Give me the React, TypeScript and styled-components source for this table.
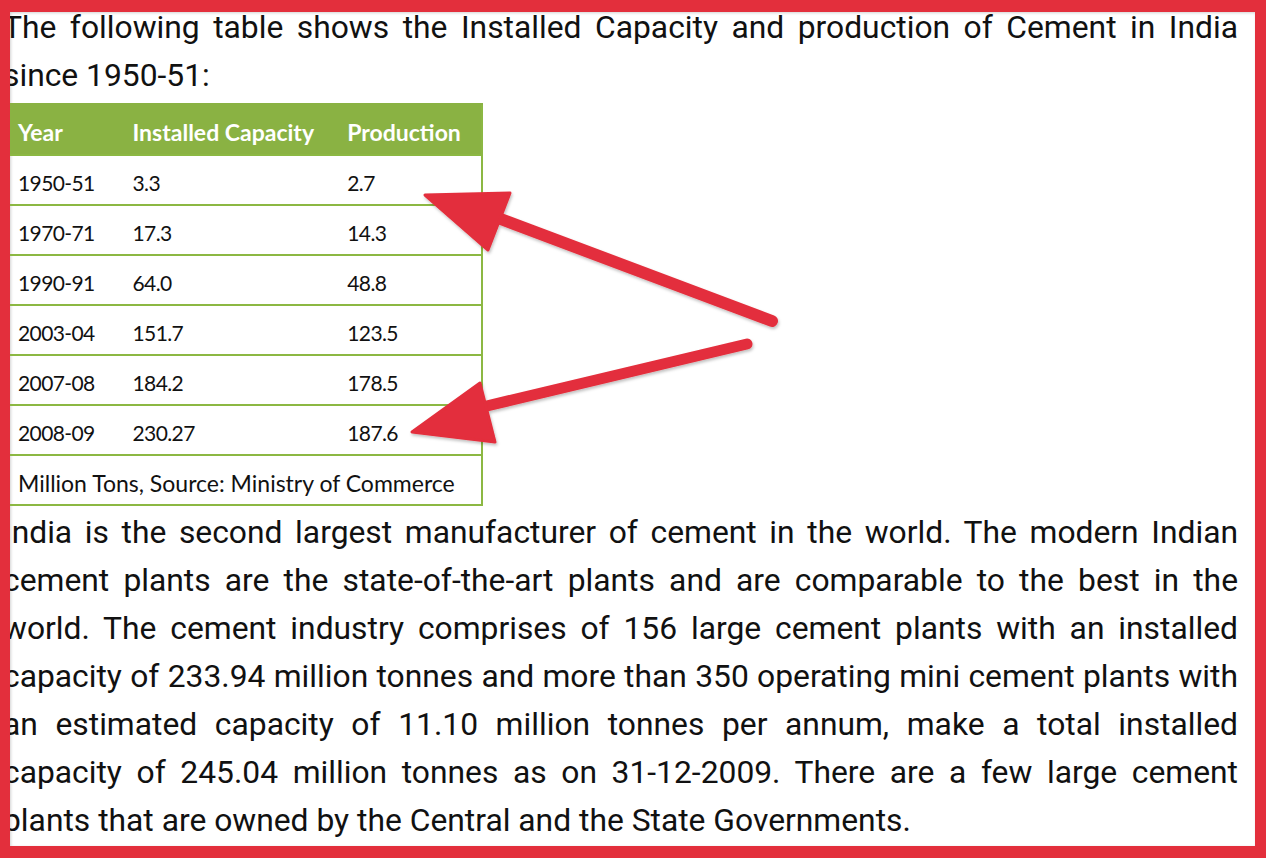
import React from "react";
import styled, { createGlobalStyle } from "styled-components";

const Global = createGlobalStyle`
  html, body { margin: 0; padding: 0; background: #ffffff; }
  * { box-sizing: border-box; }
`;

const Frame = styled.div`
  position: relative;
  width: 1266px;
  height: 858px;
  border-style: solid;
  border-color: #e32f3c;
  border-width: 12px 11px 12px 10px;
  background: #ffffff;
  overflow: hidden;
  box-shadow: inset 1px 1px 3px rgba(0, 0, 0, 0.18);
`;

const Content = styled.div`
  margin: -9px 0 0 -7px;
  width: 1235px;
  font-family: Roboto, "Liberation Sans", sans-serif;
  font-size: 31.8px;
  line-height: 48px;
  color: #111111;
`;

const Para = styled.p`
  margin: 0;
  text-align: justify;
`;

const Table = styled.table`
  margin: 4px 0 2px 0;
  border-collapse: collapse;
  width: 480px;
  font-family: Lato, "Open Sans", sans-serif;
  font-size: 23px;
  line-height: 26px;
  color: #111111;
  border: 2px solid #8cb843;
`;

const HeadCell = styled.th<{ $w: number }>`
  width: ${(p) => p.$w}px;
  height: 51px;
  background: #8ab243;
  color: #ffffff;
  font-weight: 700;
  text-align: left;
  padding: 4px 0 0 13px;
  border-top: 2px solid #8ab243;
  border-bottom: 2px solid #8cb843;
`;

const Cell = styled.td<{ $num?: boolean }>`
  height: 50px;
  padding: 5px 0 0 13px;
  border-top: 2px solid #8cb843;
  text-align: left;
  font-size: ${(p) => (p.$num ? "21px" : "23px")};
  letter-spacing: ${(p) => (p.$num ? "-0.6px" : "0")};
`;

const Arrows = styled.svg`
  position: absolute;
  left: -10px;
  top: -12px;
  width: 1266px;
  height: 858px;
  pointer-events: none;
`;

const rows: [string, string, string][] = [
  ["1950-51", "3.3", "2.7"],
  ["1970-71", "17.3", "14.3"],
  ["1990-91", "64.0", "48.8"],
  ["2003-04", "151.7", "123.5"],
  ["2007-08", "184.2", "178.5"],
  ["2008-09", "230.27", "187.6"],
];

export default function App() {
  return (
    <>
      <Global />
      <Frame>
        <Content>
          <Para>
            The following table shows the Installed Capacity and production of
            Cement in India since 1950-51:
          </Para>
          <Table>
            <thead>
              <tr>
                <HeadCell $w={116}>Year</HeadCell>
                <HeadCell $w={216}>Installed Capacity</HeadCell>
                <HeadCell $w={148}>Production</HeadCell>
              </tr>
            </thead>
            <tbody>
              {rows.map((r) => (
                <tr key={r[0]}>
                  <Cell $num>{r[0]}</Cell>
                  <Cell $num>{r[1]}</Cell>
                  <Cell $num>{r[2]}</Cell>
                </tr>
              ))}
              <tr>
                <Cell colSpan={3}>Million Tons, Source: Ministry of Commerce</Cell>
              </tr>
            </tbody>
          </Table>
          <Para>
            India is the second largest manufacturer of cement in the world. The
            modern Indian cement plants are the state-of-the-art plants and are
            comparable to the best in the world. The cement industry comprises of
            156 large cement plants with an installed capacity of 233.94 million
            tonnes and more than 350 operating mini cement plants with an
            estimated capacity of 11.10 million tonnes per annum, make a total
            installed capacity of 245.04 million tonnes as on 31-12-2009. There
            are a few large cement plants that are owned by the Central and the
            State Governments.
          </Para>
        </Content>
        <Arrows viewBox="0 0 1266 858">
          <defs>
            <filter id="sh" x="-10%" y="-10%" width="120%" height="120%">
              <feDropShadow dx="1" dy="2" stdDeviation="1.5" floodColor="#000" floodOpacity="0.25" />
            </filter>
          </defs>
          <g fill="#e32f3c" stroke="#e32f3c" strokeLinejoin="round" strokeLinecap="round" filter="url(#sh)">
            <line x1="772" y1="321" x2="490" y2="215" strokeWidth="12" />
            <polygon points="425,195 510,193 488,250" strokeWidth="3" />
            <line x1="747" y1="344" x2="470" y2="410" strokeWidth="11" />
            <polygon points="412,432 480,383 495,442" strokeWidth="3" />
          </g>
        </Arrows>
      </Frame>
    </>
  );
}
